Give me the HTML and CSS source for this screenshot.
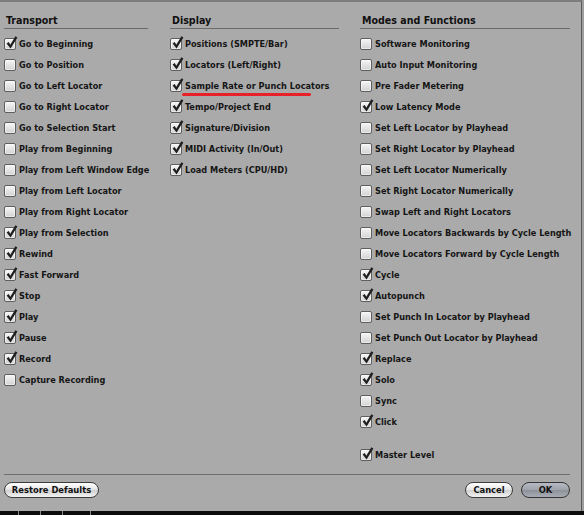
FILE: index.html
```html
<!DOCTYPE html>
<html>
<head>
<meta charset="utf-8">
<link rel="stylesheet" href="styles.css">
</head>
<body>
<div class="dialog">
  <div class="columns">
    <section class="col col1">
      <h2 class="head">Transport</h2>
      <ul class="list">
        <li class="row on"><span class="box"></span><span class="lbl">Go to Beginning</span></li>
        <li class="row"><span class="box"></span><span class="lbl">Go to Position</span></li>
        <li class="row"><span class="box"></span><span class="lbl">Go to Left Locator</span></li>
        <li class="row"><span class="box"></span><span class="lbl">Go to Right Locator</span></li>
        <li class="row"><span class="box"></span><span class="lbl">Go to Selection Start</span></li>
        <li class="row"><span class="box"></span><span class="lbl">Play from Beginning</span></li>
        <li class="row"><span class="box"></span><span class="lbl">Play from Left Window Edge</span></li>
        <li class="row"><span class="box"></span><span class="lbl">Play from Left Locator</span></li>
        <li class="row"><span class="box"></span><span class="lbl">Play from Right Locator</span></li>
        <li class="row on"><span class="box"></span><span class="lbl">Play from Selection</span></li>
        <li class="row on"><span class="box"></span><span class="lbl">Rewind</span></li>
        <li class="row on"><span class="box"></span><span class="lbl">Fast Forward</span></li>
        <li class="row on"><span class="box"></span><span class="lbl">Stop</span></li>
        <li class="row on"><span class="box"></span><span class="lbl">Play</span></li>
        <li class="row on"><span class="box"></span><span class="lbl">Pause</span></li>
        <li class="row on"><span class="box"></span><span class="lbl">Record</span></li>
        <li class="row"><span class="box"></span><span class="lbl">Capture Recording</span></li>
      </ul>
    </section>
    <section class="col col2">
      <h2 class="head">Display</h2>
      <ul class="list">
        <li class="row on"><span class="box"></span><span class="lbl">Positions (SMPTE/Bar)</span></li>
        <li class="row on"><span class="box"></span><span class="lbl">Locators (Left/Right)</span></li>
        <li class="row on"><span class="box"></span><span class="lbl marked">Sample Rate or Punch Locators</span></li>
        <li class="row on"><span class="box"></span><span class="lbl">Tempo/Project End</span></li>
        <li class="row on"><span class="box"></span><span class="lbl">Signature/Division</span></li>
        <li class="row on"><span class="box"></span><span class="lbl">MIDI Activity (In/Out)</span></li>
        <li class="row on"><span class="box"></span><span class="lbl">Load Meters (CPU/HD)</span></li>
      </ul>
    </section>
    <section class="col col3">
      <h2 class="head">Modes and Functions</h2>
      <ul class="list">
        <li class="row"><span class="box"></span><span class="lbl">Software Monitoring</span></li>
        <li class="row"><span class="box"></span><span class="lbl">Auto Input Monitoring</span></li>
        <li class="row"><span class="box"></span><span class="lbl">Pre Fader Metering</span></li>
        <li class="row on"><span class="box"></span><span class="lbl">Low Latency Mode</span></li>
        <li class="row"><span class="box"></span><span class="lbl">Set Left Locator by Playhead</span></li>
        <li class="row"><span class="box"></span><span class="lbl">Set Right Locator by Playhead</span></li>
        <li class="row"><span class="box"></span><span class="lbl">Set Left Locator Numerically</span></li>
        <li class="row"><span class="box"></span><span class="lbl">Set Right Locator Numerically</span></li>
        <li class="row"><span class="box"></span><span class="lbl">Swap Left and Right Locators</span></li>
        <li class="row"><span class="box"></span><span class="lbl">Move Locators Backwards by Cycle Length</span></li>
        <li class="row"><span class="box"></span><span class="lbl">Move Locators Forward by Cycle Length</span></li>
        <li class="row on"><span class="box"></span><span class="lbl">Cycle</span></li>
        <li class="row on"><span class="box"></span><span class="lbl">Autopunch</span></li>
        <li class="row"><span class="box"></span><span class="lbl">Set Punch In Locator by Playhead</span></li>
        <li class="row"><span class="box"></span><span class="lbl">Set Punch Out Locator by Playhead</span></li>
        <li class="row on"><span class="box"></span><span class="lbl">Replace</span></li>
        <li class="row on"><span class="box"></span><span class="lbl">Solo</span></li>
        <li class="row"><span class="box"></span><span class="lbl">Sync</span></li>
        <li class="row on"><span class="box"></span><span class="lbl">Click</span></li>
        <li class="row on spaced"><span class="box"></span><span class="lbl">Master Level</span></li>
      </ul>
    </section>
  </div>
  <div class="footer">
    <button class="btn">Restore Defaults</button>
    <div class="right">
      <button class="btn cancel">Cancel</button>
      <button class="btn ok">OK</button>
    </div>
  </div>
</div>
<div class="strip">
  <span class="tick t1"></span><span class="tick t2"></span><span class="tick t3"></span><span class="tick t4"></span>
</div>
</body>
</html>
```
FILE: styles.css
```css
html, body {
  margin: 0;
  padding: 0;
}
body {
  width: 584px;
  height: 515px;
  background: #9d9d9d;
  font-family: "DejaVu Sans Condensed", "DejaVu Sans", sans-serif;
  font-weight: bold;
  color: #151515;
  overflow: hidden;
}
.dialog {
  width: 581px;
  height: 509px;
  background: #aaaaaa;
  border-top: 2px solid #7e7e7e;
  border-right: 1px solid #5a5a5a;
  display: flex;
  flex-direction: column;
}
.columns {
  display: flex;
  padding: 11px 0 0 4px;
  height: 461px;
}
.col1 { width: 166px; }
.col2 { width: 190px; }
.col3 { width: 221px; }
.head {
  margin: 0;
  font-size: 10.6px;
  font-weight: bold;
  line-height: 15px;
  height: 15px;
  padding-left: 2px;
  border-bottom: 1px solid #6a6a6a;
  color: #111;
}
.col1 .head { width: 142px; }
.col2 .head { width: 167px; }
.col3 .head { width: 208px; }
.list {
  list-style: none;
  margin: 4px 0 0 0;
  padding: 0;
}
.row {
  height: 21px;
  display: flex;
  align-items: center;
  font-size: 9.1px;
  white-space: nowrap;
}
.row.spaced { margin-top: 12px; }
.box {
  position: relative;
  width: 10px;
  height: 10px;
  border: 1px solid #5e5e5e;
  border-radius: 2px;
  background: linear-gradient(#f6f6f6, #d2d2d2);
  box-shadow: inset 0 0 0 1px rgba(255,255,255,0.5);
  margin-right: 3px;
  flex: none;
}
.row.on .box::after {
  content: "";
  position: absolute;
  left: 1px;
  top: -3px;
  width: 12px;
  height: 13px;
  background: no-repeat center / 12px 13px url("data:image/svg+xml,%3Csvg xmlns='http://www.w3.org/2000/svg' viewBox='0 0 12 13'%3E%3Cpath d='M0.6 7.6 L2.7 6.1 L4.3 8.7 L9.4 0.2 L11.4 1.4 L4.6 12.5 Z' fill='%231e1e1e'/%3E%3C/svg%3E");
}
.lbl { position: relative; }
.marked::after {
  content: "";
  position: absolute;
  left: -3px;
  top: 12px;
  width: 129px;
  height: 3px;
  border-radius: 2px;
  background: #e8202a;
}
.footer {
  margin: 0 11px 0 4px;
  border-top: 1px solid #6e6e6e;
  padding-top: 7px;
  display: flex;
  justify-content: space-between;
}
.right { display: flex; gap: 8px; }
.btn {
  height: 16px;
  padding: 0;
  border: 1px solid #3c3c3c;
  border-radius: 8px;
  background: linear-gradient(#ffffff, #e4e4e4 50%, #cfcfcf 51%, #f2f2f2);
  font-family: "DejaVu Sans Condensed", "DejaVu Sans", sans-serif;
  font-weight: bold;
  font-size: 9.3px;
  line-height: 14px;
  color: #111;
  width: 95px;
}
.btn.cancel { width: 48px; }
.btn.ok {
  width: 49px;
  background: linear-gradient(#b6bbc3, #9ea3ab 50%, #8c9199 51%, #a8adb5);
  border-color: #343434;
}
.strip {
  position: relative;
  height: 4px;
  background: #0c0c0c;
}
.tick {
  position: absolute;
  top: 0;
  width: 1px;
  height: 4px;
  background: #8a8a8a;
}
.t1 { left: 18px; }
.t2 { left: 40px; }
.t3 { left: 62px; }
.t4 { left: 90px; }
```
